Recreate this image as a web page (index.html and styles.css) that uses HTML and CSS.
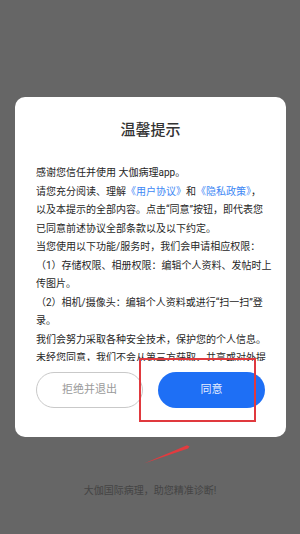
FILE: index.html
```html
<!DOCTYPE html>
<html lang="zh-CN">
<head>
<meta charset="utf-8">
<title>温馨提示</title>
<link rel="stylesheet" href="styles.css">
</head>
<body>
<div class="screen">
  <div class="dialog">
    <h1 class="title">温馨提示</h1>
    <div class="content">
      <p>感谢您信任并使用 大伽病理app。</p>
      <p>请您充分阅读、理解<a class="link">《用户协议》</a>和<a class="link">《隐私政策》</a>，<br>以及本提示的全部内容。点击“同意”按钮，即代表您<br>已同意前述协议全部条款以及以下约定。</p>
      <p>当您使用以下功能/服务时，我们会申请相应权限：</p>
      <p>（1）存储权限、相册权限：编辑个人资料、发帖时上<br>传图片。</p>
      <p>（2）相机/摄像头：编辑个人资料或进行“扫一扫”登<br>录。</p>
      <p>我们会努力采取各种安全技术，保护您的个人信息。</p>
      <p>未经您同意，我们不会从第三方获取、共享或对外提<br>供您的信息。</p>
    </div>
    <div class="actions">
      <button class="btn btn-cancel">拒绝并退出</button>
      <button class="btn btn-ok">同意</button>
    </div>
  </div>
  <p class="slogan">大伽国际病理，助您精准诊断!</p>
  <div class="highlight"></div>
  <svg class="arrow" width="56" height="30" viewBox="0 0 56 30" xmlns="http://www.w3.org/2000/svg">
    <polygon points="4,23.5 47,5.2 49.5,6.5 48,8.6" fill="#e23b3f"/>
  </svg>
</div>
</body>
</html>
```

FILE: styles.css
```css
html, body {
  margin: 0;
  padding: 0;
  background: #666666;
}

body {
  font-family: Roboto, "Noto Sans CJK SC", sans-serif;
}

.screen {
  position: relative;
  width: 300px;
  height: 534px;
  overflow: hidden;
  padding-top: 97px;
  box-sizing: border-box;
}

.dialog {
  margin-left: 15px;
  width: 271px;
  background: #ffffff;
  border-radius: 10px;
  padding: 23px 21px 29px;
  box-sizing: border-box;
}

.title {
  margin: 0;
  font-size: 15px;
  line-height: 20px;
  font-weight: 500;
  text-align: center;
  color: #333333;
}

.content {
  margin-top: 24px;
  margin-right: -10px;
  height: 197px;
  overflow: hidden;
  font-size: 10px;
  line-height: 18.5px;
  color: #262626;
  white-space: nowrap;
}

.content p {
  margin: 0;
}

.link {
  color: #3d87f5;
  text-decoration: none;
}

.actions {
  display: flex;
  gap: 15px;
  margin-top: 11px;
}

.btn {
  display: flex;
  align-items: center;
  justify-content: center;
  width: 107px;
  height: 36px;
  border-radius: 18px;
  font-family: inherit;
  font-size: 11px;
  line-height: 16px;
  padding: 0;
  box-sizing: border-box;
}

.btn-cancel {
  background: #ffffff;
  border: 1px solid #c9c9c9;
  color: #9a9a9a;
}

.btn-ok {
  background: #1e6ff5;
  border: none;
  color: #e4edff;
}

.slogan {
  margin: 47px 0 0;
  text-align: center;
  font-size: 10px;
  line-height: 14px;
  color: #444444;
}

.highlight {
  position: absolute;
  left: 139px;
  top: 358px;
  width: 117px;
  height: 64px;
  box-sizing: border-box;
  border: 2px solid #e0393e;
}

.arrow {
  position: absolute;
  left: 140px;
  top: 440px;
}
```
